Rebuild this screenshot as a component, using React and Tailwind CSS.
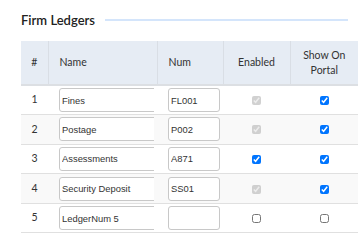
import React from 'react';

const rows = [
  { id: 1, name: 'Fines', num: 'FL001', enabled: true, enabledDisabled: true, portal: true },
  { id: 2, name: 'Postage', num: 'P002', enabled: true, enabledDisabled: true, portal: true },
  { id: 3, name: 'Assessments', num: 'A871', enabled: true, enabledDisabled: false, portal: true },
  { id: 4, name: 'Security Deposit', num: 'SS01', enabled: true, enabledDisabled: true, portal: true },
  { id: 5, name: 'LedgerNum 5', num: '', enabled: false, enabledDisabled: false, portal: false },
];

const App = () => {
  return (
    <div className="w-[358px] h-[250px] bg-white overflow-hidden font-['Lato',sans-serif] text-[#333]">
      {/* Title */}
      <div className="flex items-center pl-[21px] pr-[10px] pt-[11px]">
        <h2 className="text-[13px] font-semibold text-[#222] leading-[18px]">Firm Ledgers</h2>
        <div className="flex-1 ml-[10px] h-[2px] bg-[#d4e5fb]"></div>
      </div>

      {/* Table */}
      <table className="ml-[21px] mt-[12px] w-[337px] table-fixed border-collapse text-[10.5px]">
        <colgroup>
          <col className="w-[27px]" />
          <col className="w-[109px]" />
          <col className="w-[66px]" />
          <col className="w-[67px]" />
          <col className="w-[68px]" />
        </colgroup>
        <thead>
          <tr className="bg-[#e6ecf4] h-[44px] border-b-2 border-[#dcdfe3]">
            <th className="font-normal text-center border-r border-[#d9dee5]">#</th>
            <th className="font-normal text-left pl-[11px] border-r border-[#d9dee5]">Name</th>
            <th className="font-normal text-left pl-[11px] border-r border-[#d9dee5]">Num</th>
            <th className="font-normal text-center border-r border-[#d9dee5]">Enabled</th>
            <th className="font-normal text-center leading-[15px]">Show On<br />Portal</th>
          </tr>
        </thead>
        <tbody>
          {rows.map((r) => (
            <tr key={r.id} className={`h-[29.6px] border-b border-[#e0e0e0] ${r.id % 2 === 0 ? 'bg-[#f9f9f9]' : 'bg-white'}`}>
              <td className="text-center">{r.id}</td>
              <td className="pl-[11px]">
                <div className="w-[95px] overflow-hidden">
                  <input
                    type="text"
                    defaultValue={r.name}
                    className="block w-[110px] h-[24px] px-[2px] border border-[#c8c8c8] rounded-[3px] bg-white font-['Liberation_Sans',Arial,sans-serif] text-[9.4px] text-[#333] outline-none"
                  />
                </div>
              </td>
              <td className="pl-[11px]">
                <input
                  type="text"
                  defaultValue={r.num}
                  className="block w-[52px] h-[24px] px-[2px] border border-[#c8c8c8] rounded-[3px] bg-white font-['Liberation_Sans',Arial,sans-serif] text-[9.4px] text-[#333] outline-none"
                />
              </td>
              <td className="text-center">
                <input
                  type="checkbox"
                  defaultChecked={r.enabled}
                  disabled={r.enabledDisabled}
                  className="w-[9px] h-[9px] m-0 align-middle"
                />
              </td>
              <td className="text-center">
                <input
                  type="checkbox"
                  defaultChecked={r.portal}
                  className="w-[9px] h-[9px] m-0 align-middle"
                />
              </td>
            </tr>
          ))}
        </tbody>
      </table>
    </div>
  );
};

export default App;
